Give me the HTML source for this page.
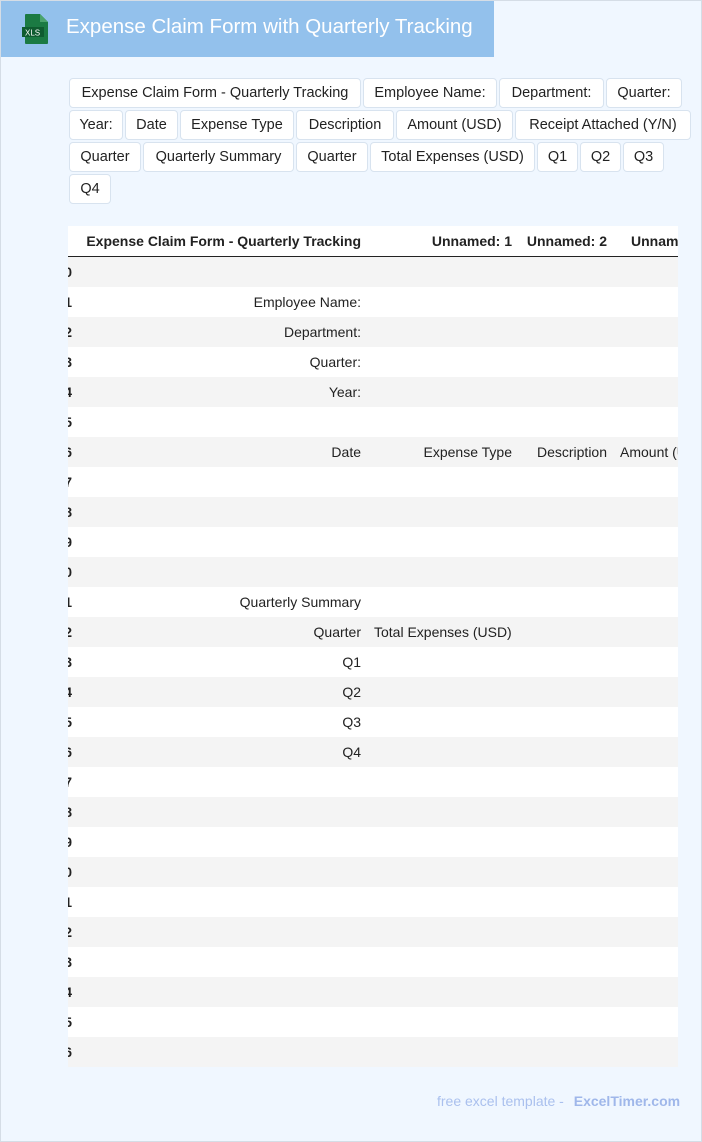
<!DOCTYPE html>
<html><head><style>
*{margin:0;padding:0;box-sizing:border-box}
body{width:702px;height:1142px;background:#f0f7ff;font-family:"Liberation Sans",sans-serif;position:relative;overflow:hidden}
.bd{position:absolute;left:0;top:0;width:702px;height:1142px;border:1px solid #d5dde6;pointer-events:none}
.hdr{position:absolute;left:0;top:0;width:494px;height:57px;background:#93c1ec}
.hdr .t{position:absolute;left:66px;top:15px;color:#fff;font-size:20.5px}
.tags{position:absolute;left:69px;top:78px;width:630px;display:flex;flex-wrap:wrap;gap:2px 2px}
.tag{background:#fff;border:1px solid #d8e3ef;border-radius:4px;height:30px;line-height:28px;text-align:center;font-size:14.5px;color:#222;white-space:nowrap;overflow:hidden}
.tbl{position:absolute;left:68px;top:226px;width:610px;height:841px;overflow:hidden;background:#fff;font-size:14px;color:#222}
.row{position:absolute;left:0;width:610px;height:30px;line-height:30px}
.row span{position:absolute;white-space:nowrap}
.g{background:#f4f4f4}
.h{font-weight:bold;border-bottom:1px solid #222;height:31px}
.foot{position:absolute;left:437px;top:1093px;font-size:14px;color:#aac0ee}
.foot b{color:#9fb7ea;margin-left:6px}
</style></head><body>
<div class="hdr">
<svg style="position:absolute;left:22px;top:13px" width="28" height="32" viewBox="0 0 28 32"><path d="M4 1h14l8 8v21a1 1 0 0 1-1 1H4a1 1 0 0 1-1-1V2a1 1 0 0 1 1-1z" fill="#1b7a43"/><path d="M18 1v8h8z" fill="#4aa36c"/><rect x="0" y="14" width="22" height="10" fill="#0f5c30"/><text x="3" y="22.5" font-size="8" fill="#fff" font-family="Liberation Sans">XLS</text></svg>
<div class="t">Expense Claim Form with Quarterly Tracking</div>
</div>
<div class="tags">
<div class="tag" style="width:292px">Expense Claim Form - Quarterly Tracking</div><div class="tag" style="width:134px">Employee Name:</div><div class="tag" style="width:105px">Department:</div><div class="tag" style="width:76px">Quarter:</div>
<div class="tag" style="width:54px">Year:</div><div class="tag" style="width:53px">Date</div><div class="tag" style="width:114px">Expense Type</div><div class="tag" style="width:98px">Description</div><div class="tag" style="width:117px">Amount (USD)</div><div class="tag" style="width:176px">Receipt Attached (Y/N)</div>
<div class="tag" style="width:72px">Quarter</div><div class="tag" style="width:151px">Quarterly Summary</div><div class="tag" style="width:72px">Quarter</div><div class="tag" style="width:165px">Total Expenses (USD)</div><div class="tag" style="width:41px">Q1</div><div class="tag" style="width:41px">Q2</div><div class="tag" style="width:41px">Q3</div><div class="tag" style="width:42px">Q4</div>
</div>
<div class="tbl">
<div class="row h" style="top:0"><span style="right:317px">Expense Claim Form - Quarterly Tracking</span><span style="right:166px">Unnamed: 1</span><span style="right:71px">Unnamed: 2</span><span style="left:563px">Unnamed: 3</span></div>
<div id="rows"></div>
</div>
<div class="foot">free excel template - <b>ExcelTimer.com</b></div>
<div class="bd"></div>
<script>
var L={1:"Employee Name:",2:"Department:",3:"Quarter:",4:"Year:",6:"Date",11:"Quarterly Summary",12:"Quarter",13:"Q1",14:"Q2",15:"Q3",16:"Q4"};
var h="";
for(var i=0;i<27;i++){
var s='<div class="row'+(i%2==0?' g':'')+'" style="top:'+(31+i*30)+'px"><span style="right:606px;font-weight:bold">'+i+'</span>';
if(L[i])s+='<span style="right:317px">'+L[i]+'</span>';
if(i==6)s+='<span style="right:166px">Expense Type</span><span style="right:71px">Description</span><span style="left:552px">Amount (USD)</span>';
if(i==12)s+='<span style="left:306px">Total Expenses (USD)</span>';
h+=s+'</div>';}
document.getElementById("rows").innerHTML=h;
</script>
</body></html>
